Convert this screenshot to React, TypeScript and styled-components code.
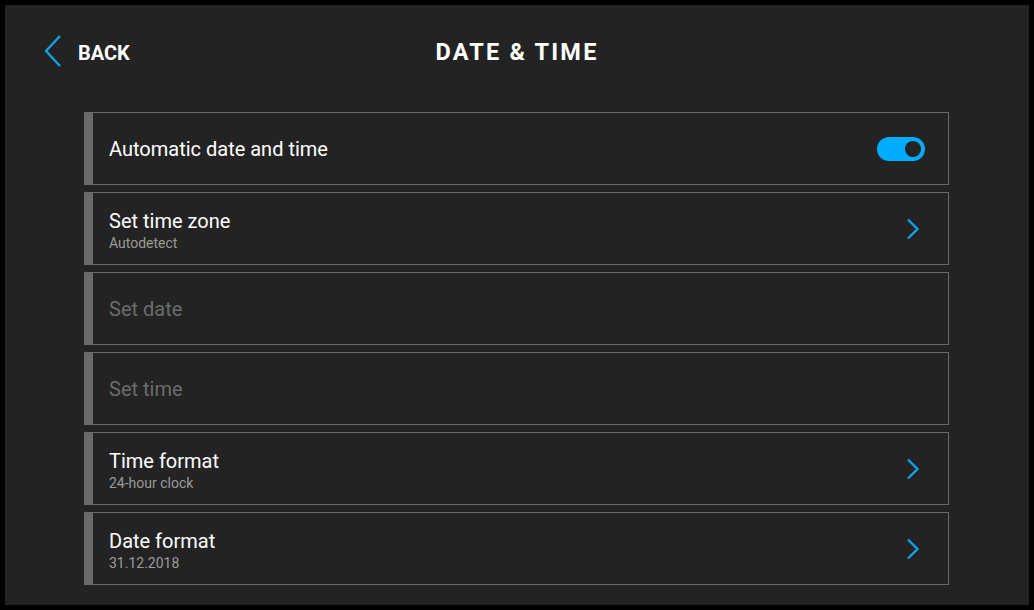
import React from "react"
import styled, { createGlobalStyle } from "styled-components"

const GlobalStyle = createGlobalStyle`
  html, body {
    margin: 0;
    background: #000;
  }
  body {
    font-family: Roboto, "Liberation Sans", sans-serif;
  }
`

type Item = {
  title: string
  sub?: string
  disabled?: boolean
  kind: "toggle" | "chevron" | "none"
}

const items: Item[] = [
  { title: "Automatic date and time", kind: "toggle" },
  { title: "Set time zone", sub: "Autodetect", kind: "chevron" },
  { title: "Set date", disabled: true, kind: "none" },
  { title: "Set time", disabled: true, kind: "none" },
  { title: "Time format", sub: "24-hour clock", kind: "chevron" },
  { title: "Date format", sub: "31.12.2018", kind: "chevron" },
]

const Chevron = ({ left = false }: { left?: boolean }) =>
  left ? (
    <svg width="18" height="32" viewBox="0 0 18 32">
      <path d="M16 1 L2 16 L16 31" fill="none" stroke="#0fa2e6" strokeWidth="2.4" />
    </svg>
  ) : (
    <svg width="14" height="22" viewBox="0 0 14 22">
      <path d="M2 1.5 L11.5 11 L2 20.5" fill="none" stroke="#0fa2e6" strokeWidth="2.4" />
    </svg>
  )

export default function App() {
  return (
    <>
      <GlobalStyle />
      <Screen>
        <Header>
          <BackButton>
            <Chevron left />
            <span>BACK</span>
          </BackButton>
          <Title>DATE &amp; TIME</Title>
          <span />
        </Header>
        <List>
          {items.map(it => (
            <Row key={it.title}>
              <Texts twoLine={!!it.sub}>
                <RowTitle disabled={it.disabled}>{it.title}</RowTitle>
                {it.sub && <RowSub>{it.sub}</RowSub>}
              </Texts>
              {it.kind === "toggle" && (
                <Toggle>
                  <Knob />
                </Toggle>
              )}
              {it.kind === "chevron" && (
                <ChevronBox>
                  <Chevron />
                </ChevronBox>
              )}
            </Row>
          ))}
        </List>
      </Screen>
    </>
  )
}

const Screen = styled.div`
  width: 1024px;
  height: 600px;
  margin: 5px;
  background: #232323;
  box-sizing: border-box;
  display: flex;
  flex-direction: column;
`
const Header = styled.div`
  height: 92px;
  display: grid;
  grid-template-columns: 1fr auto 1fr;
  align-items: center;
  padding: 0 39px;
`
const BackButton = styled.div`
  display: flex;
  align-items: center;
  gap: 16px;
  color: #fff;
  font-size: 20px;
  font-weight: 700;
  padding-top: 4px;

  svg {
    margin-top: -4px;
  }
`
const Title = styled.div`
  color: #fff;
  font-size: 23.5px;
  font-weight: 700;
  letter-spacing: 2.2px;
  padding-top: 2px;
`
const List = styled.div`
  margin-top: 15px;
  padding: 0 80px 0 79px;
  display: flex;
  flex-direction: column;
  gap: 7px;
`
const Row = styled.div`
  height: 73px;
  box-sizing: border-box;
  border: 1px solid #6a6a6a;
  border-left: 9px solid #6a6a6a;
  display: flex;
  align-items: center;
  padding: 0 23px 0 16px;
`
const Texts = styled.div<{ twoLine?: boolean }>`
  flex: 1;
  display: flex;
  flex-direction: column;
  padding-top: ${p => (p.twoLine ? "3px" : "0")};
`
const RowTitle = styled.div<{ disabled?: boolean }>`
  font-size: 20px;
  line-height: 24px;
  color: ${p => (p.disabled ? "#6c6c6c" : "#ffffff")};
`
const RowSub = styled.div`
  font-size: 14px;
  line-height: 18px;
  margin-top: 1px;
  color: #9b9b9b;
`
const Toggle = styled.div`
  width: 48px;
  height: 24px;
  border-radius: 12px;
  background: #00acff;
  display: flex;
  align-items: center;
  justify-content: flex-end;
  padding-right: 4px;
  box-sizing: border-box;
`
const Knob = styled.div`
  width: 16px;
  height: 16px;
  border-radius: 50%;
  background: #232323;
`
const ChevronBox = styled.div`
  width: 24px;
  display: flex;
  justify-content: center;
  padding-left: 6px;
`
